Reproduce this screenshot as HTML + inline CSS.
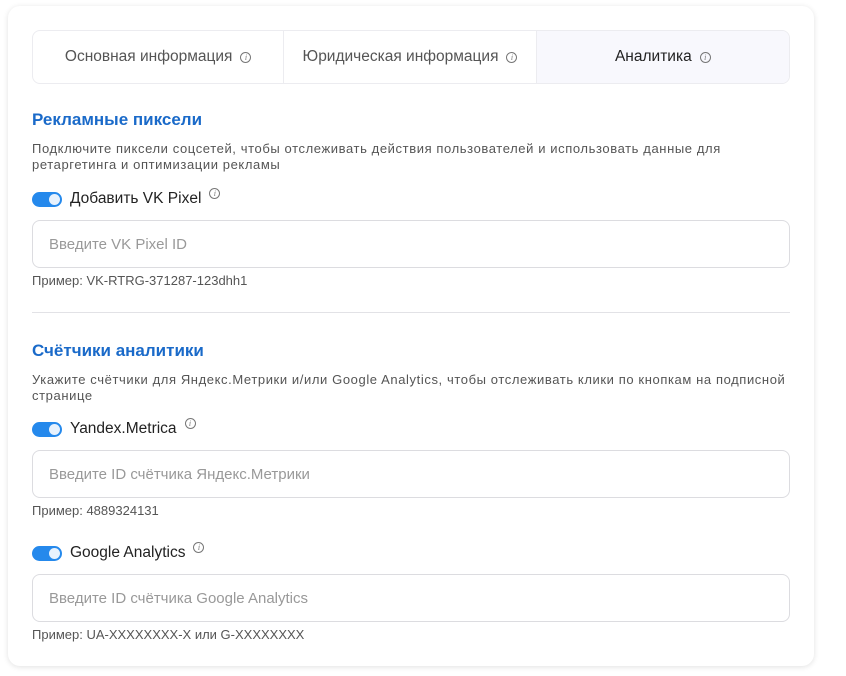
<!DOCTYPE html>
<html><head><meta charset="utf-8"><style>
*{box-sizing:border-box;margin:0;padding:0}
body{width:846px;height:676px;background:#fff;font-family:"Liberation Sans",Arial,sans-serif;position:relative;overflow:hidden}
.card{position:absolute;left:8px;top:6px;width:806px;height:660px;border-radius:12px;background:#fff;box-shadow:0 1px 6px rgba(0,0,0,.12)}
.tabs{position:absolute;left:32px;top:30px;width:758px;height:54px;border:1px solid #ececf0;border-radius:8px;display:flex;overflow:hidden}
.tab{display:flex;align-items:center;justify-content:center;font-size:15.5px;color:#555;border-right:1px solid #ececf0}
.tab:last-child{border-right:0;background:#f8f8fd;color:#222}
.i{display:inline-block;width:11px;height:11px;border:1px solid #777;border-radius:50%;font-size:8px;line-height:9px;text-align:center;color:#777;font-style:italic;margin-left:8px;font-family:"Liberation Serif",serif}
.a{position:absolute;left:32px}
h2{font-size:17px;color:#1a6ac9;font-weight:bold}
.desc{font-size:13px;color:#555;line-height:16px;width:800px;white-space:nowrap;letter-spacing:0.6px}
.tg{display:flex;align-items:center;font-size:15.5px;color:#222}
.sw{width:30px;height:15px;border-radius:8px;background:#2589ec;position:relative;margin-right:8px}
.sw:after{content:"";position:absolute;right:2px;top:2px;width:11px;height:11px;border-radius:50%;background:#e8f2fd}
.tg .i{margin-left:8px;position:relative;top:-6px}
.inp{width:758px;height:48px;border:1px solid #dcdce0;border-radius:8px;font-size:15px;color:#999;padding:15px 0 0 16px}
.ex{font-size:13px;color:#555}
.hr{position:absolute;left:32px;top:312px;width:758px;height:1px;background:#e2e2e6}
</style></head><body>
<div class="card"></div>
<div class="tabs">
<div class="tab" style="width:252px">Основная информация<span class="i">i</span></div>
<div class="tab" style="width:253px">Юридическая информация<span class="i">i</span></div>
<div class="tab" style="width:253px">Аналитика<span class="i">i</span></div>
</div>
<h2 class="a" style="top:110px">Рекламные пиксели</h2>
<div class="a desc" style="top:141px">Подключите пиксели соцсетей, чтобы отслеживать действия пользователей и использовать данные для<br>ретаргетинга и оптимизации рекламы</div>
<div class="a tg" style="top:190px"><span class="sw"></span>Добавить VK Pixel<span class="i">i</span></div>
<div class="a inp" style="top:220px">Введите VK Pixel ID</div>
<div class="a ex" style="top:273px">Пример: VK-RTRG-371287-123dhh1</div>
<div class="hr"></div>
<h2 class="a" style="top:341px">Счётчики аналитики</h2>
<div class="a desc" style="top:372px">Укажите счётчики для Яндекс.Метрики и/или Google Analytics, чтобы отслеживать клики по кнопкам на подписной<br>странице</div>
<div class="a tg" style="top:420px"><span class="sw"></span>Yandex.Metrica<span class="i">i</span></div>
<div class="a inp" style="top:450px">Введите ID счётчика Яндекс.Метрики</div>
<div class="a ex" style="top:503px">Пример: 4889324131</div>
<div class="a tg" style="top:544px"><span class="sw"></span>Google Analytics<span class="i">i</span></div>
<div class="a inp" style="top:574px">Введите ID счётчика Google Analytics</div>
<div class="a ex" style="top:627px">Пример: UA-XXXXXXXX-X или G-XXXXXXXX</div>
</body></html>
